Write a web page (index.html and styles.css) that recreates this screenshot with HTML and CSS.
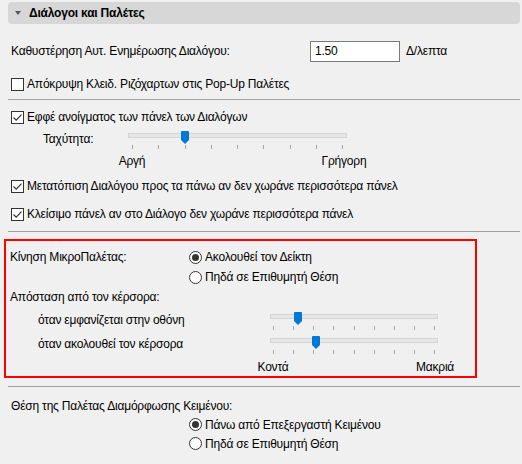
FILE: index.html
```html
<!DOCTYPE html>
<html lang="el">
<head>
<meta charset="utf-8">
<title>Διάλογοι και Παλέτες</title>
<link rel="stylesheet" href="styles.css">
</head>
<body>
<div class="page">
  <div class="header"><span class="tri"></span><span class="title">Διάλογοι και Παλέτες</span></div>

  <div class="row row-delay">
    <span class="label-col">Καθυστέρηση Αυτ. Ενημέρωσης Διαλόγου:</span>
    <div class="input">1.50</div>
    <span class="unit">Δ/λεπτα</span>
  </div>

  <div class="row check-row r2">
    <span class="cb"></span><span>Απόκρυψη Κλειδ. Ριζόχαρτων στις Pop-Up Παλέτες</span>
  </div>

  <div class="sep s1"></div>

  <div class="row check-row r3">
    <span class="cb"><svg viewBox="0 0 13 13" width="13" height="13"><path d="M2.5 6.5 L5.2 9.2 L10.5 3.6" fill="none" stroke="#333" stroke-width="1.2"/></svg></span><span>Εφφέ ανοίγματος των πάνελ των Διαλόγων</span>
  </div>

  <div class="speed-row">
    <span class="speed-label">Ταχύτητα:</span>
    <div class="slider slider-speed">
      <div class="track"></div>
      <div class="ticks t4"><i></i><i></i><i></i><i></i><i></i><i></i><i></i><i></i><i></i></div>
      <svg class="thumb" style="left:53px" viewBox="0 0 8 13" width="8" height="13"><path d="M1 0 H7 Q8 0 8 1 V9 L4 13 L0 9 V1 Q0 0 1 0Z" fill="#0078d7"/></svg>
    </div>
  </div>
  <div class="scale scale-speed"><span><b>Αργή</b></span><span><b>Γρήγορη</b></span></div>

  <div class="row check-row r4">
    <span class="cb"><svg viewBox="0 0 13 13" width="13" height="13"><path d="M2.5 6.5 L5.2 9.2 L10.5 3.6" fill="none" stroke="#333" stroke-width="1.2"/></svg></span><span>Μετατόπιση Διαλόγου προς τα πάνω αν δεν χωράνε περισσότερα πάνελ</span>
  </div>
  <div class="row check-row r5">
    <span class="cb"><svg viewBox="0 0 13 13" width="13" height="13"><path d="M2.5 6.5 L5.2 9.2 L10.5 3.6" fill="none" stroke="#333" stroke-width="1.2"/></svg></span><span>Κλείσιμο πάνελ αν στο Διάλογο δεν χωράνε περισσότερα πάνελ</span>
  </div>

  <div class="sep s2"></div>

  <div class="redbox">
    <div class="rb-row rb-first">
      <span class="rb-label">Κίνηση ΜικροΠαλέτας:</span>
      <span class="radio on"></span><span class="rtext">Ακολουθεί τον Δείκτη</span>
    </div>
    <div class="rb-row">
      <span class="rb-label"></span>
      <span class="radio"></span><span class="rtext">Πηδά σε Επιθυμητή Θέση</span>
    </div>
    <div class="rb-row">
      <span>Απόσταση από τον κέρσορα:</span>
    </div>
    <div class="dist-row d1">
      <span class="dist-label">όταν εμφανίζεται στην οθόνη</span>
      <div class="slider slider-dist">
        <div class="track"></div>
        <div class="ticks t3"><i></i><i></i><i></i><i></i><i></i><i></i><i></i><i></i><i></i></div>
        <svg class="thumb" style="left:24px" viewBox="0 0 8 13" width="8" height="13"><path d="M1 0 H7 Q8 0 8 1 V9 L4 13 L0 9 V1 Q0 0 1 0Z" fill="#0078d7"/></svg>
      </div>
    </div>
    <div class="dist-row d2">
      <span class="dist-label">όταν ακολουθεί τον κέρσορα</span>
      <div class="slider slider-dist">
        <div class="track"></div>
        <div class="ticks t3"><i></i><i></i><i></i><i></i><i></i><i></i><i></i><i></i><i></i></div>
        <svg class="thumb" style="left:42px" viewBox="0 0 8 13" width="8" height="13"><path d="M1 0 H7 Q8 0 8 1 V9 L4 13 L0 9 V1 Q0 0 1 0Z" fill="#0078d7"/></svg>
      </div>
    </div>
    <div class="scale scale-dist"><span><b>Κοντά</b></span><span><b>Μακριά</b></span></div>
  </div>

  <div class="sep s3"></div>

  <div class="row text-pos">Θέση της Παλέτας Διαμόρφωσης Κειμένου:</div>
  <div class="radio-row rr1"><span class="radio on"></span><span class="rtext">Πάνω από Επεξεργαστή Κειμένου</span></div>
  <div class="radio-row"><span class="radio"></span><span class="rtext">Πηδά σε Επιθυμητή Θέση</span></div>
</div>
</body>
</html>
```
FILE: styles.css
```css
html, body {
  margin: 0;
  padding: 0;
}
body {
  background: #f0f0f0;
  font-family: "Liberation Sans", "Noto Sans", sans-serif;
  font-size: 12px;
  letter-spacing: -0.2px;
  color: #000;
  width: 522px;
  height: 464px;
  overflow: hidden;
}
.page {
  padding-top: 2px;
}
.header {
  margin: 0 2px 0 8px;
  height: 22px;
  background: #d7d7d7;
  border-radius: 4px;
  display: flex;
  align-items: center;
  padding-left: 7px;
}
.tri {
  width: 0;
  height: 0;
  border-left: 3.5px solid transparent;
  border-right: 3.5px solid transparent;
  border-top: 4px solid #555;
  margin-right: 8px;
}
.title {
  font-weight: bold;
}
.row {
  margin-left: 10px;
  display: flex;
  align-items: center;
  white-space: nowrap;
}
.row-delay {
  margin-top: 16px;
  height: 22px;
}
.label-col {
  width: 300px;
  padding-left: 1px;
  box-sizing: border-box;
}
.input {
  width: 90px;
  height: 21px;
  box-sizing: border-box;
  border: 1px solid #7a7a7a;
  background: #fff;
  padding-left: 4px;
  display: flex;
  align-items: center;
}
.unit {
  margin-left: 6px;
}
.check-row {
  height: 20px;
}
.cb {
  width: 13px;
  height: 13px;
  box-sizing: border-box;
  border: 1px solid #333;
  background: #fff;
  margin-left: 1px;
  margin-right: 3px;
  position: relative;
  flex: none;
}
.cb svg {
  position: absolute;
  left: -1px;
  top: -1px;
}
.r2 { margin-top: 12px; }
.r3 { margin-top: 7px; }
.r4 { margin-top: 6px; }
.r5 { margin-top: 8px; }
.sep {
  height: 1px;
  background: #a0a0a0;
  margin: 0 2px 0 8px;
}
.s1 { margin-top: 5px; }
.s2 { margin-top: 7px; }
.s3 { margin-top: 8px; }

.speed-row {
  margin-top: 4px;
  margin-left: 43px;
  display: flex;
  height: 18px;
}
.speed-label {
  width: 85px;
  line-height: 16px;
}
.slider {
  position: relative;
  height: 18px;
}
.slider-speed { width: 219px; }
.slider-dist { width: 168px; }
.track {
  margin-top: 2px;
  height: 5px;
  box-sizing: border-box;
  border: 1px solid #d4d4d4;
  background: #e6e6e6;
}
.ticks {
  margin-top: 7px;
  height: 4px;
  display: flex;
  justify-content: space-between;
}
.ticks.t4 { padding: 0 4px; }
.ticks.t3 { padding: 0 3px; }
.ticks i {
  width: 1px;
  height: 4px;
  background: #a8a8a8;
}
.thumb {
  position: absolute;
  top: 0;
}
.scale {
  display: flex;
  justify-content: space-between;
  height: 18px;
  line-height: 18px;
}
.scale span {
  width: 0;
  display: flex;
  justify-content: center;
}
.scale b {
  font-weight: normal;
  white-space: nowrap;
}
.scale-speed {
  margin-top: 3px;
  margin-left: 132px;
  width: 212px;
}
.redbox {
  margin-top: 7px;
  margin-left: 4px;
  width: 473px;
  box-sizing: border-box;
  border: 2px solid #ff0000;
  padding: 6px 0 0 4px;
}
.rb-row {
  display: flex;
  align-items: center;
  height: 20px;
  white-space: nowrap;
}
.rb-label {
  width: 179px;
}
.radio {
  width: 13px;
  height: 13px;
  box-sizing: border-box;
  border: 1px solid #333;
  border-radius: 50%;
  background: #fff;
  display: flex;
  align-items: center;
  justify-content: center;
  flex: none;
  margin-right: 3px;
}
.radio.on::after {
  content: "";
  width: 7px;
  height: 7px;
  border-radius: 50%;
  background: #333;
}
.dist-row {
  display: flex;
  height: 18px;
  margin-left: 28px;
}
.d1 { margin-top: 5px; }
.d2 { margin-top: 6px; }
.dist-label {
  width: 232px;
  line-height: 16px;
  white-space: nowrap;
}
.scale-dist {
  margin-top: 4px;
  margin-left: 263px;
  width: 162px;
}
.text-pos {
  margin-top: 10px;
  height: 18px;
  padding-left: 1px;
}
.radio-row {
  margin-left: 189px;
  height: 19px;
  display: flex;
  align-items: center;
  white-space: nowrap;
}
```
